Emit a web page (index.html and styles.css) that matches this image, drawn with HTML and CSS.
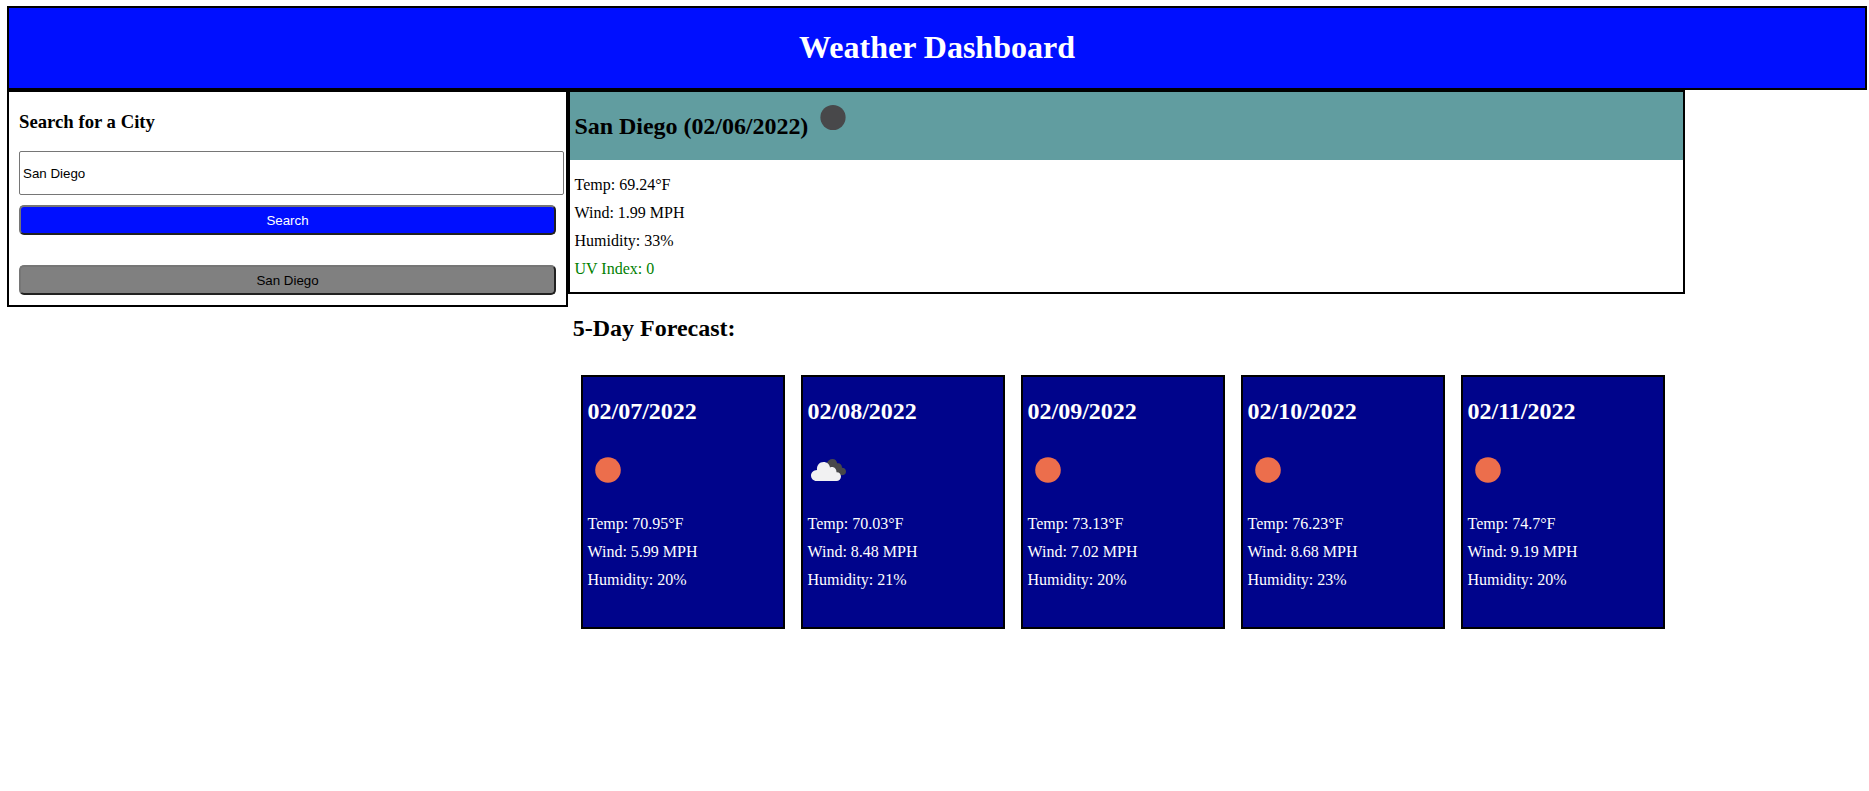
FILE: index.html
```html
<!DOCTYPE html>
<html lang="en">
<head>
<meta charset="utf-8">
<title>Weather Dashboard</title>
<link rel="stylesheet" href="styles.css">
</head>
<body>
<header class="header"><h1>Weather Dashboard</h1></header>
<div class="layout">
  <aside class="sidebar">
    <h3>Search for a City</h3>
    <input class="city-input" type="text" value="San Diego">
    <button class="btn search-btn">Search</button>
    <button class="btn history-btn">San Diego</button>
  </aside>
  <main class="main">
    <section class="current">
      <div class="current-title">
        <h2>San Diego (02/06/2022)</h2>
        <svg class="icon" viewBox="0 0 50 50"><circle cx="25" cy="25.5" r="12.6" fill="#48484a"/></svg>
      </div>
      <div class="current-details">
        <p>Temp: 69.24°F</p>
        <p>Wind: 1.99 MPH</p>
        <p>Humidity: 33%</p>
        <p class="uv">UV Index: 0</p>
      </div>
    </section>
    <h2 class="forecast-title">5-Day Forecast:</h2>
    <section class="forecast">
      <article class="card">
        <h2>02/07/2022</h2>
        <svg class="icon" viewBox="0 0 50 50"><circle cx="25" cy="25" r="12.8" fill="#ec6e4c"/></svg>
        <p>Temp: 70.95°F</p><p>Wind: 5.99 MPH</p><p>Humidity: 20%</p>
      </article>
      <article class="card">
        <h2>02/08/2022</h2>
        <svg class="icon" viewBox="0 0 50 50">
          <path fill="#48484a" d="M23.5 19C24.5 15.8 27 14 29.5 14C32 14 33.6 15.5 34.2 18.2C37 17.8 39.2 20 39 22.800C41.5 22.8 43 24.5 43 26.5C43 29 41.2 30.2 39 30.2L28 27Z"/>
          <path fill="#f1f1f2" d="M13.5 36C10.5 36 8 33.5 8 30.5C8 27.5 10.5 25.2 14 25C13.5 20.5 16.5 17 20.5 17C24 17 26.5 19.2 27 22.5C30.5 21 33.5 23.5 33.5 27.2C36.2 27 38 29 38 31.5C38 34.2 36 36 33.5 36Z"/>
        </svg>
        <p>Temp: 70.03°F</p><p>Wind: 8.48 MPH</p><p>Humidity: 21%</p>
      </article>
      <article class="card">
        <h2>02/09/2022</h2>
        <svg class="icon" viewBox="0 0 50 50"><circle cx="25" cy="25" r="12.8" fill="#ec6e4c"/></svg>
        <p>Temp: 73.13°F</p><p>Wind: 7.02 MPH</p><p>Humidity: 20%</p>
      </article>
      <article class="card">
        <h2>02/10/2022</h2>
        <svg class="icon" viewBox="0 0 50 50"><circle cx="25" cy="25" r="12.8" fill="#ec6e4c"/></svg>
        <p>Temp: 76.23°F</p><p>Wind: 8.68 MPH</p><p>Humidity: 23%</p>
      </article>
      <article class="card">
        <h2>02/11/2022</h2>
        <svg class="icon" viewBox="0 0 50 50"><circle cx="25" cy="25" r="12.8" fill="#ec6e4c"/></svg>
        <p>Temp: 74.7°F</p><p>Wind: 9.19 MPH</p><p>Humidity: 20%</p>
      </article>
    </section>
  </main>
</div>
</body>
</html>
```
FILE: styles.css
```css
* { box-sizing: border-box; }
body {
  margin: 6px 2px 0 7px;
  background: #fff;
  color: #000;
  font: 16px/28px "Liberation Serif", "Times New Roman", serif;
}
h1, h2, h3, p { margin: 0; }
h1 { font-size: 32px; line-height: 36px; }
h2 { font-size: 24px; line-height: 28px; }
h3 { font-size: 18.72px; line-height: 22px; }
.icon { display: block; width: 50px; height: 50px; flex: none; }

.header {
  height: 84px;
  padding-top: 21px;
  border: 2px solid #000;
  background: #000fff;
  color: #fff;
  text-align: center;
}
.layout { display: flex; align-items: flex-start; }
.sidebar {
  width: 561px;
  height: 217px;
  padding: 19px 10px 0;
  border: 2px solid #000;
}
.city-input, .btn {
  display: block;
  font: 13.333px "Liberation Sans", Arial, sans-serif;
}
.city-input {
  width: 545px;
  height: 44px;
  margin-top: 18px;
  padding: 1px 3px;
  border: 1px solid #767676;
  border-radius: 2px;
  background: #fff;
  color: #000;
}
.btn {
  width: 537px;
  height: 30px;
  padding: 0;
  border: 2px solid;
  border-color: #767676 #212121 #212121 #767676;
  border-radius: 5px;
}
.search-btn { margin-top: 10px; background: #000fff; color: #fff; }
.history-btn { margin-top: 30px; background: #808080; color: #000; }

.main { width: 1117px; }
.current { height: 204px; border: 2px solid #000; }
.current-title {
  display: flex;
  height: 68px;
  padding-left: 4.5px;
  background: #619da0;
}
.current-title h2 { padding-top: 20px; letter-spacing: -0.04px; }
.current-details { padding: 11px 4.5px 0; }
.uv { color: #008000; }
.forecast-title { margin: 20px 0 0 4.7px; }
.forecast { display: flex; gap: 16px; margin: 33px 0 0 13px; }
.card {
  width: 204px;
  height: 254px;
  padding: 20px 4.5px 0;
  border: 2px solid #000;
  background: #00048b;
  color: #fff;
}
.card .icon { margin: 20px 0 15px -4.5px; }
```
